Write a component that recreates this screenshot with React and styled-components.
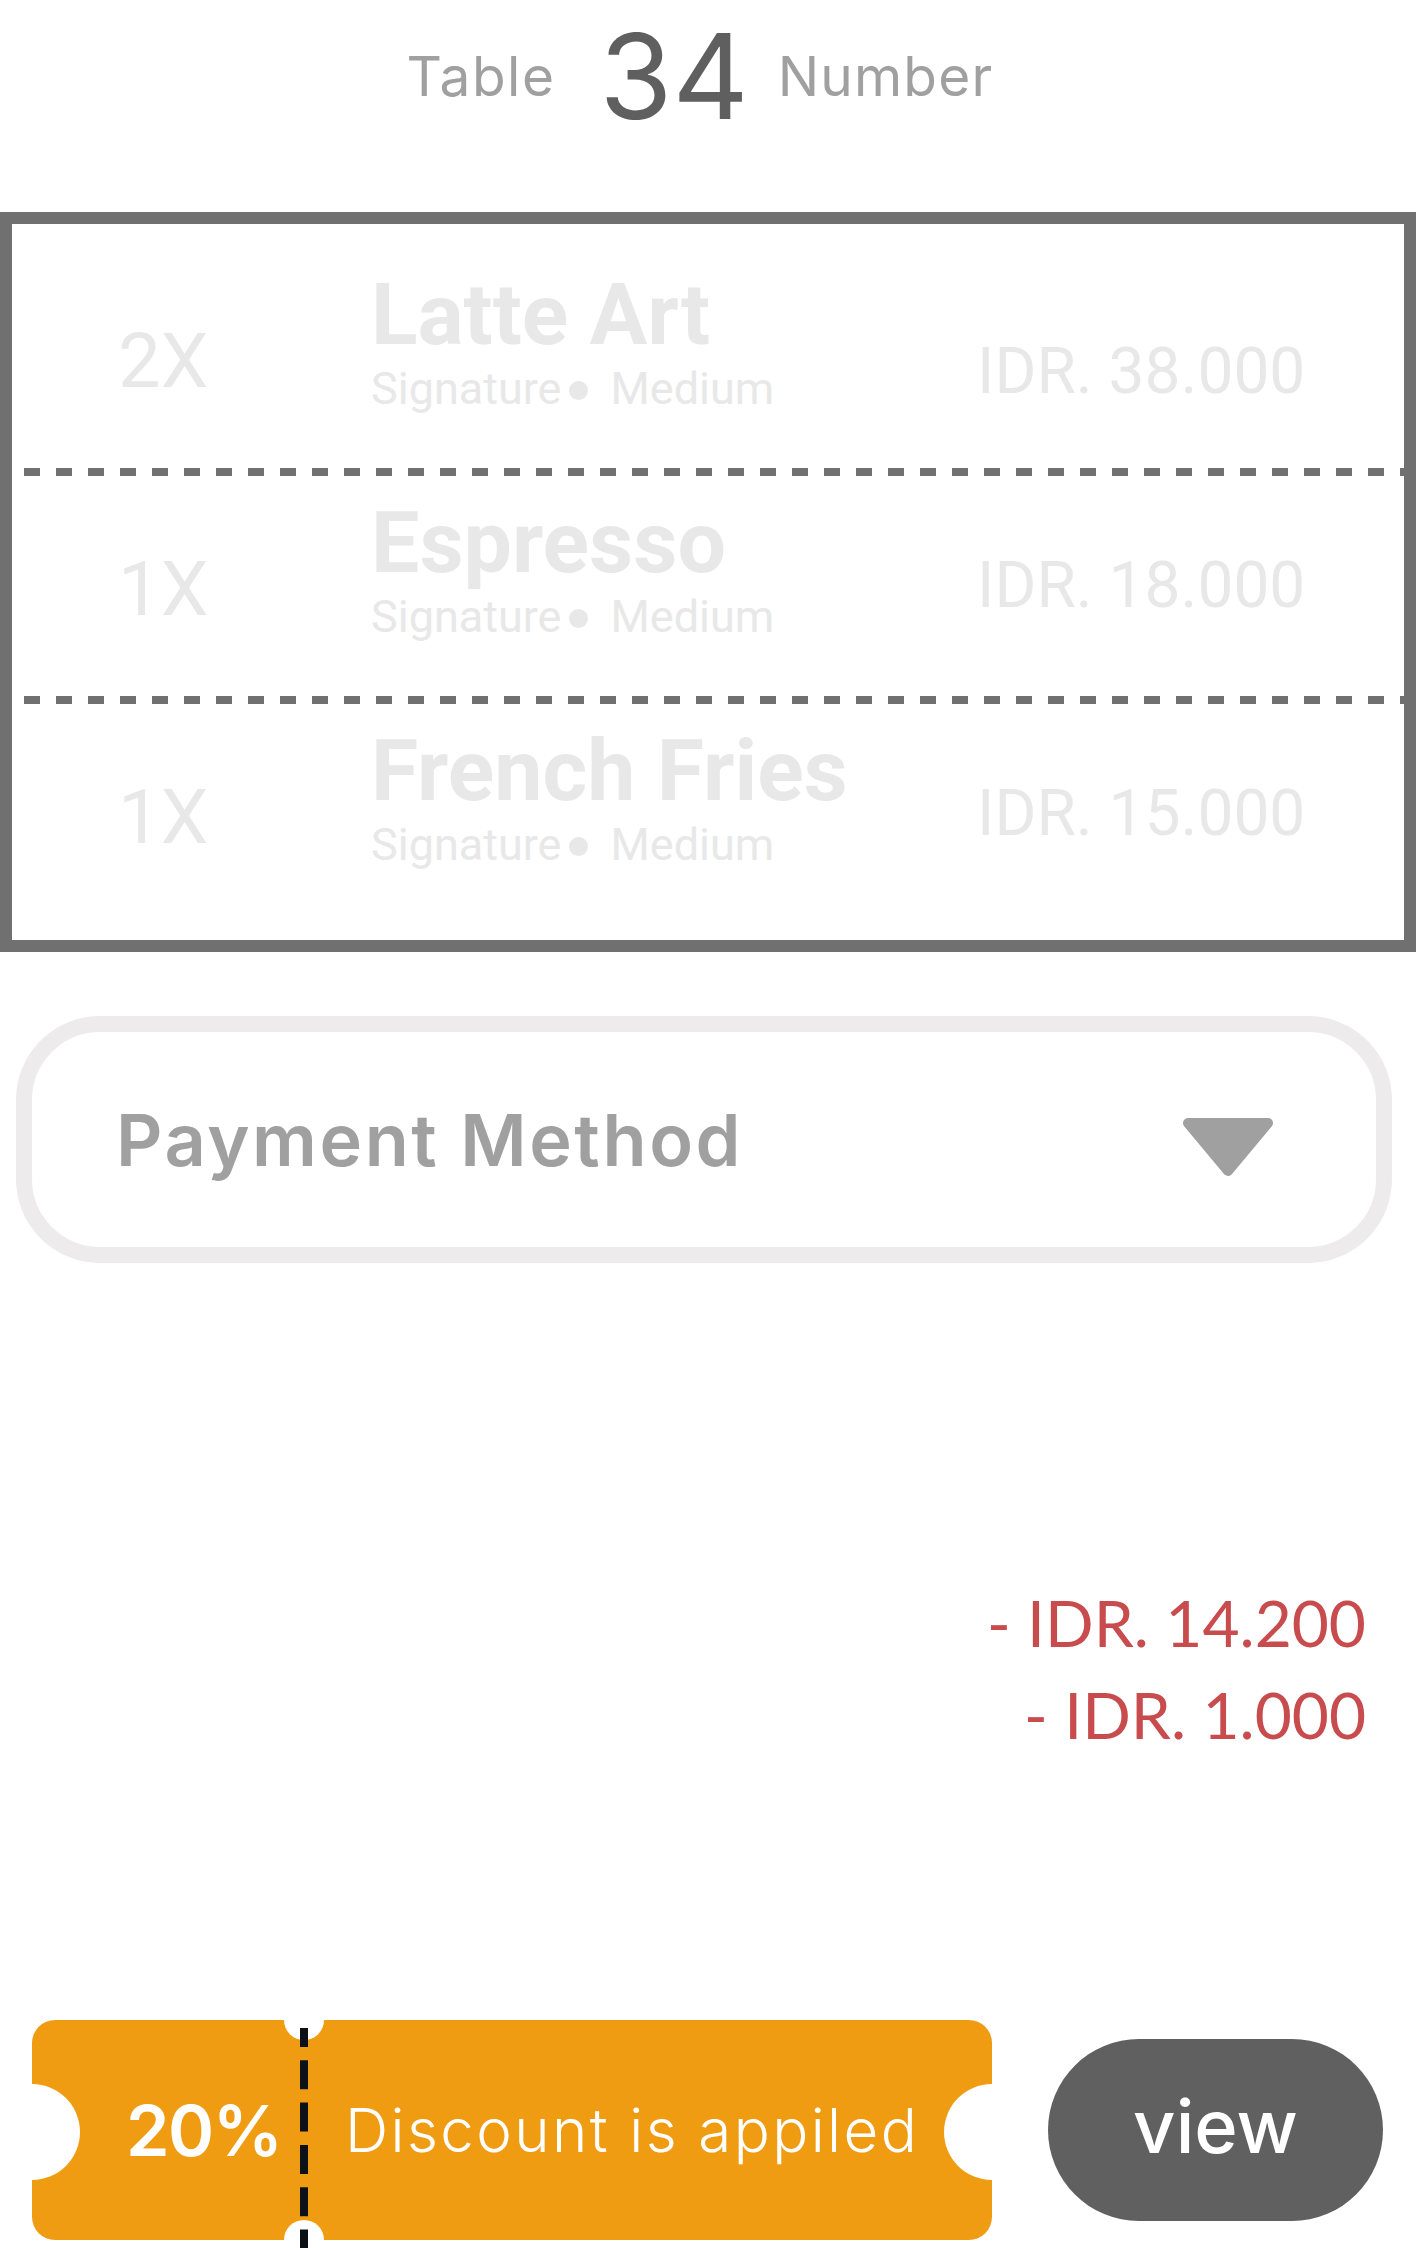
import React from "react";
import styled, { createGlobalStyle } from "styled-components";

const Global = createGlobalStyle`
  html, body { margin: 0; padding: 0; background: #ffffff; }
  body { font-family: "Inter", "Liberation Sans", sans-serif; }
  * { box-sizing: border-box; }
`;

const Page = styled.div`
  width: 1416px;
  height: 2248px;
  overflow: hidden;
  display: flex;
  flex-direction: column;
`;

const Header = styled.header`
  height: 152px;
  display: flex;
  justify-content: center;
  align-items: center;
  padding-right: 16px;
  margin-bottom: 60px;
`;

const HeaderLabel = styled.span`
  font-family: "Inter", sans-serif;
  font-size: 55px;
  font-weight: 400;
  color: #a0a0a0;
  letter-spacing: ${(p) => p.$spacing || "1.5px"};
`;

const TableNo = styled.span`
  font-family: "Inter", sans-serif;
  font-size: 118px;
  font-weight: 400;
  color: #5f5f5f;
  line-height: 1;
  margin: 0 29px 0 44px;
`;

const ItemsBox = styled.section`
  border: 12px solid #707070;
  padding: 24px 0 16px;
  display: flex;
  flex-direction: column;
`;

const ItemRow = styled.div`
  height: 220px;
  display: grid;
  grid-template-columns: 253px 606px 1fr;
  padding-left: 106px;
  color: #e8e8e8;
  font-family: "Roboto", sans-serif;
`;

const Qty = styled.div`
  align-self: center;
  font-size: 76px;
  line-height: 1;
  padding-top: 6px;
`;

const NameBlock = styled.div`
  align-self: start;
  padding-top: 20px;
  display: flex;
  flex-direction: column;
`;

const ItemName = styled.div`
  font-size: 86px;
  font-weight: 700;
  line-height: 94px;
  white-space: nowrap;
`;

const ItemSub = styled.div`
  margin-top: 4px;
  font-size: 45px;
  line-height: 45px;
  display: flex;
  align-items: center;
  white-space: nowrap;
`;

const Dot = styled.span`
  display: inline-block;
  width: 19px;
  height: 19px;
  border-radius: 50%;
  background: #e8e8e8;
  margin: 4px 22px 0 8px;
`;

const Price = styled.div`
  align-self: center;
  font-size: 64px;
  line-height: 1;
  white-space: nowrap;
  padding-top: ${(p) => p.$drop || 0}px;
`;

const Divider = styled.div`
  height: 8px;
  margin-left: 12px;
  background: repeating-linear-gradient(
    to right,
    #707070 0 16px,
    transparent 16px 32px
  );
`;

const PaymentSelect = styled.div`
  margin: 64px 24px 0 16px;
  height: 247px;
  border: 16px solid #edebec;
  border-radius: 84px;
  display: flex;
  align-items: center;
  justify-content: space-between;
  padding: 0 102px 0 84px;
`;

const PaymentLabel = styled.span`
  font-family: "Inter", sans-serif;
  font-size: 72px;
  font-weight: 600;
  color: #a0a0a0;
  letter-spacing: 2.6px;
`;

const Caret = styled.svg`
  width: 92px;
  height: 60px;
  margin-top: 14px;
  display: block;
`;

const Totals = styled.div`
  margin-top: 314px;
  padding-right: 50px;
  display: flex;
  flex-direction: column;
  align-items: flex-end;
`;

const TotalLine = styled.div`
  font-family: "Lato", sans-serif;
  font-size: 64px;
  line-height: 92px;
  color: #c84b4d;
  white-space: nowrap;
`;

const Footer = styled.div`
  margin-top: 259px;
  display: flex;
  align-items: center;
  padding-left: 32px;
`;

const Ticket = styled.div`
  position: relative;
  width: 960px;
  height: 220px;
  border-radius: 23px;
  background: #ef9c13;
  display: grid;
  grid-template-columns: 272px 1fr;
  align-items: center;
  color: #ffffff;
`;

const Notch = styled.span`
  position: absolute;
  border-radius: 50%;
  background: #ffffff;
  width: ${(p) => p.$size}px;
  height: ${(p) => p.$size}px;
  left: ${(p) => p.$x - p.$size / 2}px;
  top: ${(p) => p.$y - p.$size / 2}px;
`;

const CutLine = styled.svg`
  position: absolute;
  left: 268px;
  top: 8px;
  width: 8px;
  height: 220px;
`;

const Percent = styled.span`
  padding-left: 94px;
  font-family: "Inter", sans-serif;
  font-size: 70px;
  font-weight: 600;
  letter-spacing: -1.5px;
`;

const DiscountText = styled.span`
  padding-left: 41px;
  font-family: "Inter", sans-serif;
  font-size: 60px;
  font-weight: 300;
  letter-spacing: 2.4px;
  white-space: nowrap;
`;

const ViewButton = styled.button`
  margin-left: 56px;
  width: 335px;
  height: 182px;
  border: none;
  border-radius: 91px;
  background: #606060;
  color: #ffffff;
  font-family: "Inter", sans-serif;
  font-size: 74px;
  font-weight: 500;
  display: flex;
  align-items: center;
  justify-content: center;
  padding: 0 0 8px;
`;

const items = [
  { qty: "2X", name: "Latte Art", price: "IDR. 38.000", drop: 28 },
  { qty: "1X", name: "Espresso", price: "IDR. 18.000", drop: 0 },
  { qty: "1X", name: "French Fries", price: "IDR. 15.000", drop: 0 },
];

export default function App() {
  return (
    <Page>
      <Global />
      <Header>
        <HeaderLabel>Table</HeaderLabel>
        <TableNo>34</TableNo>
        <HeaderLabel $spacing="1.2px">Number</HeaderLabel>
      </Header>

      <ItemsBox>
        {items.map((it, i) => (
          <React.Fragment key={it.name}>
            {i > 0 && <Divider />}
            <ItemRow>
              <Qty>{it.qty}</Qty>
              <NameBlock>
                <ItemName>{it.name}</ItemName>
                <ItemSub>
                  Signature
                  <Dot />
                  Medium
                </ItemSub>
              </NameBlock>
              <Price $drop={it.drop}>{it.price}</Price>
            </ItemRow>
          </React.Fragment>
        ))}
      </ItemsBox>

      <PaymentSelect>
        <PaymentLabel>Payment Method</PaymentLabel>
        <Caret viewBox="0 0 92 60">
          <polygon
            points="6,6 86,6 46,54"
            fill="#a0a0a0"
            stroke="#a0a0a0"
            strokeWidth="10"
            strokeLinejoin="round"
          />
        </Caret>
      </PaymentSelect>

      <Totals>
        <TotalLine>- IDR. 14.200</TotalLine>
        <TotalLine>- IDR. 1.000</TotalLine>
      </Totals>

      <Footer>
        <Ticket>
          <Notch $size={96} $x={0} $y={112} />
          <Notch $size={96} $x={960} $y={112} />
          <Notch $size={40} $x={272} $y={0} />
          <Notch $size={40} $x={272} $y={220} />
          <CutLine viewBox="0 0 8 220">
            <line
              x1="4"
              y1="0"
              x2="4"
              y2="220"
              stroke="#0c1117"
              strokeWidth="8"
              strokeDasharray="29 13.3"
              strokeDashoffset="10"
            />
          </CutLine>
          <Percent>20%</Percent>
          <DiscountText>Discount is appiled</DiscountText>
        </Ticket>
        <ViewButton>view</ViewButton>
      </Footer>
    </Page>
  );
}
